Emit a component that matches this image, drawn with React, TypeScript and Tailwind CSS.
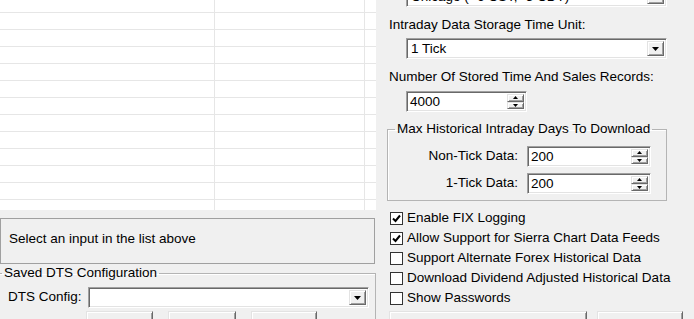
const sunken =
  "bg-white border border-t-[#a0a0a0] border-l-[#a0a0a0] border-b-white border-r-white shadow-[inset_1px_1px_0_#696969,inset_-1px_-1px_0_#e3e3e3]";
const raised =
  "bg-[#f0f0f0] border border-t-[#e3e3e3] border-l-[#e3e3e3] border-b-[#696969] border-r-[#696969] shadow-[inset_1px_1px_0_#ffffff,inset_-1px_-1px_0_#a0a0a0]";

function Arrow({ up = false, small = false }: { up?: boolean; small?: boolean }) {
  const w = small ? 5 : 7;
  const h = small ? 3 : 4;
  return (
    <svg width={w} height={h} viewBox={`0 0 ${w} ${h}`} className="block">
      {up ? (
        <polygon points={`${w / 2},0 ${w},${h} 0,${h}`} fill="#000" />
      ) : (
        <polygon points={`0,0 ${w},0 ${w / 2},${h}`} fill="#000" />
      )}
    </svg>
  );
}

function Combo({ value, className }: { value?: string; className: string }) {
  return (
    <div className={`${sunken} ${className} shrink-0 flex items-stretch p-[2px]`}>
      <span className="flex-1 pl-[2px] leading-[15px] whitespace-nowrap overflow-hidden">{value}</span>
      <span className={`${raised} w-[17px] flex items-center justify-center`}>
        <Arrow />
      </span>
    </div>
  );
}

function Spin({ value, className }: { value: string; className: string }) {
  return (
    <div className={`${sunken} ${className} shrink-0 flex items-stretch p-[2px]`}>
      <span className="flex-1 pl-[1px] leading-[16px]">{value}</span>
      <span className="w-[17px] flex flex-col">
        <span className={`${raised} flex-1 flex items-center justify-center`}>
          <Arrow up small />
        </span>
        <span className={`${raised} flex-1 flex items-center justify-center`}>
          <Arrow small />
        </span>
      </span>
    </div>
  );
}

function Check({ label, checked }: { label: string; checked?: boolean }) {
  return (
    <div className="h-[20px] flex items-center gap-[4px] whitespace-nowrap">
      <span className="ml-[1px] w-[13px] h-[13px] shrink-0 border border-[#333333] bg-white flex items-center justify-center">
        {checked && (
          <svg width="9" height="9" viewBox="0 0 9 9" className="block">
            <polyline points="1,4.5 3.5,7 8,1.5" fill="none" stroke="#000" strokeWidth="2" />
          </svg>
        )}
      </span>
      <span>{label}</span>
    </div>
  );
}

const rows = Array.from({ length: 11 });

export default function App() {
  return (
    <div
      className="w-[694px] h-[319px] overflow-hidden bg-[#f0f0f0] flex items-start text-[13.5px] text-black"
      style={{ fontFamily: '"Liberation Sans", Arial, sans-serif' }}
    >
      {/* Left — list, status and saved config */}
      <div className="w-[376px] shrink-0 flex flex-col">
        <div className="h-[210px] bg-white flex flex-col">
          <div className="h-[13px] border-b border-[#e6e6e6] flex">
            <div className="w-[215px] border-r border-[#e6e6e6]" />
            <div className="w-[150px] border-r border-[#e6e6e6]" />
          </div>
          {rows.map((_, i) => (
            <div key={i} className="h-[17px] border-b border-[#e6e6e6] flex">
              <div className="w-[215px] border-r border-[#e6e6e6]" />
              <div className="w-[150px] border-r border-[#e6e6e6]" />
            </div>
          ))}
          <div className="flex-1 flex">
            <div className="w-[215px] border-r border-[#e6e6e6]" />
            <div className="w-[150px] border-r border-[#e6e6e6]" />
          </div>
        </div>

        <div className="mt-[8px] h-[46px] w-[375px] border border-[#a0a0a0] flex items-center pl-[8px] pb-[4px]">
          Select an input in the list above
        </div>

        <fieldset className="mt-[1px] -ml-[5px] w-[381px] h-[80px] border border-[#b4b4b4] shadow-[inset_1px_1px_0_#ffffff]">
          <legend className="ml-[6px] px-[2px] leading-[16px]">Saved DTS Configuration</legend>
          <div className="mt-[6px] flex items-center">
            <span className="ml-[12px] w-[80px]">DTS Config:</span>
            <Combo className="w-[281px] h-[21px]" />
          </div>
          <div className="mt-[3px] flex gap-[15px] pl-[90px]">
            <div className={`${raised} w-[67px] h-[23px] flex justify-center pt-[3px] text-[#a0a0a0]`}>Load</div>
            <div className={`${raised} w-[68px] h-[23px] flex justify-center pt-[3px] text-[#a0a0a0]`}>Save</div>
            <div className={`${raised} w-[66px] h-[23px] flex justify-center pt-[3px] text-[#a0a0a0]`}>Delete</div>
          </div>
        </fieldset>
      </div>

      {/* Right — data settings */}
      <div className="flex-1 flex flex-col pl-[13px]">
        <div className="h-[7px] overflow-hidden">
          <Combo value="Chicago ( -6 CST, -5 CDT)" className="-mt-[14px] ml-[17px] w-[261px] h-[21px]" />
        </div>

        <div className="mt-[10px] h-[16px] leading-[16px] whitespace-nowrap">Intraday Data Storage Time Unit:</div>
        <Combo value="1 Tick" className="mt-[5px] ml-[17px] w-[261px] h-[21px]" />

        <div className="mt-[10px] h-[16px] leading-[16px] whitespace-nowrap">Number Of Stored Time And Sales Records:</div>
        <Spin value="4000" className="mt-[6px] ml-[17px] w-[121px] h-[21px]" />

        <fieldset className="mt-[9px] -ml-[2px] w-[280px] h-[80px] shrink-0 border border-[#b4b4b4] shadow-[inset_1px_1px_0_#ffffff]">
          <legend className="ml-[7px] px-[2px] leading-[16px] whitespace-nowrap">Max Historical Intraday Days To Download</legend>
          <div className="mt-[9px] flex items-center">
            <span className="w-[130px] text-right">Non-Tick Data:</span>
            <Spin value="200" className="ml-[9px] w-[124px] h-[21px]" />
          </div>
          <div className="mt-[6px] flex items-center">
            <span className="w-[130px] text-right">1-Tick Data:</span>
            <Spin value="200" className="ml-[9px] w-[124px] h-[21px]" />
          </div>
        </fieldset>

        <div className="mt-[7px] flex flex-col">
          <Check label="Enable FIX Logging" checked />
          <Check label="Allow Support for Sierra Chart Data Feeds" checked />
          <Check label="Support Alternate Forex Historical Data" />
          <Check label="Download Dividend Adjusted Historical Data" />
          <Check label="Show Passwords" />
        </div>

        <div className="mt-[3px] flex gap-[10px]">
          <div className={`${raised} w-[198px] h-[23px] shrink-0`} />
          <div className={`${raised} w-[86px] h-[23px] shrink-0`} />
        </div>
      </div>
    </div>
  );
}
